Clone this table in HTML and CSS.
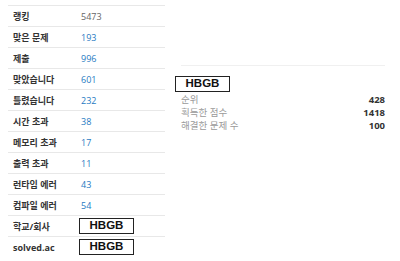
FILE: index.html
```html
<!DOCTYPE html>
<html lang="ko">
<head>
    <meta charset="UTF-8">
    <title>HBGB 정보</title>
    <link rel="stylesheet" href="styles.css">
</head>
<body>

<div class="page">
    <table class="stats">
        <tr><th>랭킹</th><td class="plain">5473</td></tr>
        <tr><th>맞은 문제</th><td><a href="#">193</a></td></tr>
        <tr><th>제출</th><td><a href="#">996</a></td></tr>
        <tr><th>맞았습니다</th><td><a href="#">601</a></td></tr>
        <tr><th>틀렸습니다</th><td><a href="#">232</a></td></tr>
        <tr><th>시간 초과</th><td><a href="#">38</a></td></tr>
        <tr><th>메모리 초과</th><td><a href="#">17</a></td></tr>
        <tr><th>출력 초과</th><td><a href="#">11</a></td></tr>
        <tr><th>런타임 에러</th><td><a href="#">43</a></td></tr>
        <tr><th>컴파일 에러</th><td><a href="#">54</a></td></tr>
        <tr><th>학교/회사</th><td><span class="badge">HBGB</span></td></tr>
        <tr><th>solved.ac</th><td><span class="badge">HBGB</span></td></tr>
    </table>

    <div class="side">
        <div class="rule"></div>
        <span class="badge">HBGB</span>
        <table class="summary">
            <tr><td>순위</td><th>428</th></tr>
            <tr><td>획득한 점수</td><th>1418</th></tr>
            <tr><td>해결한 문제 수</td><th>100</th></tr>
        </table>
    </div>
</div>

</body>
</html>
```

FILE: styles.css
```css
body {
    margin: 0;
    font-family: "Open Sans", "Noto Sans CJK KR", sans-serif;
    font-size: 9px;
    color: #333;
    background: #fff;
}
.page {
    display: flex;
    padding: 5px 0 0 8px;
}
table {
    border-collapse: collapse;
}
.stats {
    width: 157px;
}
.stats th,
.stats td {
    height: 20px;
    padding: 0 0 0 5px;
    border-top: 1px solid #e8e8e8;
    text-align: left;
    vertical-align: middle;
}
.stats th {
    width: 66px;
    font-weight: bold;
}
.stats td {
    padding-left: 0;
}
.stats td a {
    color: #1f7ac2;
    text-decoration: none;
    padding-left: 2px;
}
.stats td.plain {
    color: #666;
    padding-left: 2px;
}
.badge {
    display: inline-block;
    box-sizing: border-box;
    width: 55px;
    height: 16px;
    border: 1.5px solid #222;
    font-family: "Liberation Sans", sans-serif;
    font-size: 11.5px;
    font-weight: bold;
    line-height: 13px;
    text-align: center;
    color: #111;
    vertical-align: middle;
}
.side {
    width: 210px;
    margin-left: 10px;
}
.rule {
    margin: 60px 0 10px 6px;
    border-top: 1px solid #f0f0f0;
}
.side .badge {
    display: block;
}
.summary {
    width: 204px;
    margin: 1px 0 0 6px;
    font-size: 9.5px;
    line-height: 13px;
}
.summary td,
.summary th {
    height: 13px;
    padding: 0;
}
.summary td {
    color: #9a9a9a;
    text-align: left;
}
.summary th {
    text-align: right;
    font-weight: bold;
    color: #333;
}
```
